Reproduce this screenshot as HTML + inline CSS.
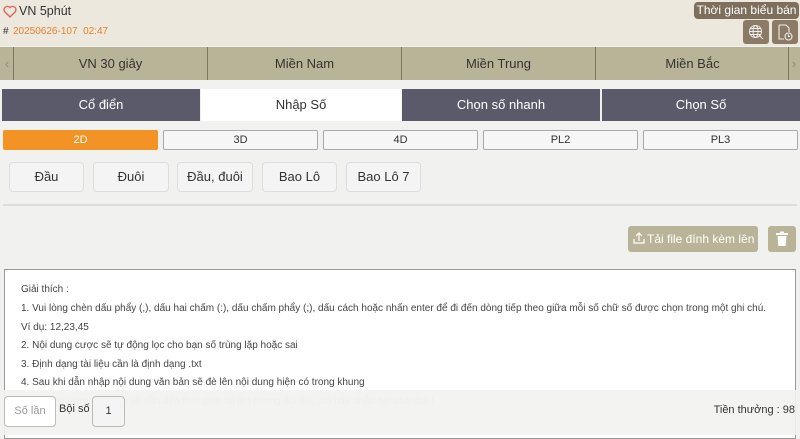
<!DOCTYPE html>
<html><head><meta charset="utf-8"><style>
*{box-sizing:border-box;margin:0;padding:0}
body{width:800px;height:435px;overflow:hidden;background:#f1f1f0;font-family:"Liberation Sans",sans-serif;color:#333;position:relative}
.hdr{position:absolute;left:0;top:0;width:800px;height:46px;background:#ede8dd}
.abs{position:absolute}
.nav{position:absolute;top:47px;left:0;width:800px;height:33px;background:#b9b497;font-size:13px;color:#333}
.nav div{position:absolute;top:0;height:33px;line-height:33px;text-align:center}
.sep{position:absolute;top:7px;width:1px;height:19px;background:#7d775f}
.tabs{position:absolute;top:89px;left:2px;width:798px;height:32px}
.tab{position:absolute;top:0;height:32px;line-height:32px;text-align:center;font-size:13px;color:#fff;background:#5b5a6a}
.seg{position:absolute;top:130px;height:20px;line-height:18px;text-align:center;font-size:11px;border:1px solid #aaa;border-radius:2px;background:#f6f6f6;color:#333}
.sb{position:absolute;top:162px;height:30px;line-height:28px;text-align:center;font-size:13px;border:1px solid #ddd;border-radius:4px;background:#f4f4f4;color:#333}
.box{position:absolute;left:4px;top:269px;width:792px;height:170px;background:#fff;border:1px solid #999;font-size:10px;color:#444}
.box p{position:absolute;left:16px;white-space:nowrap}
.bot{position:absolute;left:0;top:390px;width:800px;height:45px;background:rgba(242,242,241,0.9)}
</style></head><body>
<div class="hdr"></div>
<svg class="abs" style="left:3px;top:5px" width="14" height="13" viewBox="0 0 14 13"><path d="M7 12 L1.8 6.8 A3.2 3.2 0 0 1 7 2.6 A3.2 3.2 0 0 1 12.2 6.8 Z" fill="none" stroke="#e0604a" stroke-width="1.3"/></svg>
<div class="abs" style="left:19px;top:4px;font-size:12.5px;color:#333">VN 5phút</div>
<div class="abs" style="left:3px;top:26px;font-size:10px;color:#333">#</div>
<div class="abs" style="left:13px;top:26px;font-size:10px;color:#e77f2e">20250626-107&nbsp;&nbsp;02:47</div>
<div class="abs" style="left:694px;top:2px;width:105px;height:17px;background:#7e6f5c;border-radius:4px;color:#fff;font-size:12px;line-height:17px;text-align:center">Thời gian biểu bán</div>
<div class="abs" style="left:743px;top:20px;width:26px;height:24px;background:#8b7b66;border-radius:3px"></div>
<svg class="abs" style="left:748px;top:24px" width="17" height="17" viewBox="0 0 17 17" fill="none" stroke="#eee" stroke-width="1"><circle cx="7.5" cy="7.5" r="6"/><ellipse cx="7.5" cy="7.5" rx="2.5" ry="6"/><path d="M1.5 7.5H13.5M2.5 4.5H12.5M2.5 10.5H12.5M11 11l4 4"/></svg>
<div class="abs" style="left:772px;top:20px;width:26px;height:24px;background:#8b7b66;border-radius:3px"></div>
<svg class="abs" style="left:776px;top:23px" width="18" height="19" viewBox="0 0 18 19" fill="none" stroke="#eee" stroke-width="1.1"><path d="M3 2H10L13 5V9M3 2V16H8"/><circle cx="12.5" cy="13.5" r="3.5"/><path d="M12.5 11.5V13.5H14"/></svg>
<div class="nav">
<div style="left:2px;width:10px;color:#888">‹</div>
<div class="sep" style="left:13px"></div>
<div style="left:14px;width:193px">VN 30 giây</div>
<div class="sep" style="left:207px"></div>
<div style="left:208px;width:193px">Miền Nam</div>
<div class="sep" style="left:401px"></div>
<div style="left:402px;width:193px">Miền Trung</div>
<div class="sep" style="left:595px"></div>
<div style="left:596px;width:193px">Miền Bắc</div>
<div class="sep" style="left:788px"></div>
<div style="left:789px;width:10px;color:#888">›</div>
</div>
<div class="tabs">
<div class="tab" style="left:0;width:198px">Cổ điển</div>
<div class="tab" style="left:199px;width:200px;background:#fff;color:#333">Nhập Số</div>
<div class="tab" style="left:400px;width:198px">Chọn số nhanh</div>
<div class="tab" style="left:600px;width:198px">Chọn Số</div>
</div>
<div class="seg" style="left:3px;width:155px;background:#f39325;border-color:#f39325;color:#fff">2D</div>
<div class="seg" style="left:163px;width:155px">3D</div>
<div class="seg" style="left:323px;width:155px">4D</div>
<div class="seg" style="left:483px;width:155px">PL2</div>
<div class="seg" style="left:643px;width:155px">PL3</div>
<div class="sb" style="left:9px;width:75px">Đầu</div>
<div class="sb" style="left:93px;width:76px">Đuôi</div>
<div class="sb" style="left:177px;width:76px">Đầu, đuôi</div>
<div class="sb" style="left:262px;width:75px">Bao Lô</div>
<div class="sb" style="left:346px;width:75px">Bao Lô 7</div>
<div class="abs" style="left:3px;top:204px;width:794px;height:2px;background:#dcdcd8"></div>
<div class="abs" style="left:628px;top:226px;width:130px;height:26px;background:#b9b497;border-radius:3px;color:#fff;font-size:12px;line-height:26px;padding-left:19px">Tải file đính kèm lên</div>
<svg class="abs" style="left:633px;top:232px" width="12" height="12" viewBox="0 0 12 12" fill="none" stroke="#fff" stroke-width="1.2"><path d="M1 7V11H11V7M6 9V1M3 4L6 1L9 4"/></svg>
<div class="abs" style="left:768px;top:226px;width:28px;height:26px;background:#b9b497;border-radius:3px"></div>
<svg class="abs" style="left:775px;top:231px" width="14" height="16" viewBox="0 0 14 16" fill="#fff"><rect x="1" y="2" width="12" height="2"/><rect x="5" y="0.5" width="4" height="2"/><path d="M2.5 5H11.5L10.7 15H3.3Z"/></svg>
<div class="box">
<p style="top:14px">Giải thích :</p>
<p style="top:33px">1. Vui lòng chèn dấu phẩy (,), dấu hai chấm (:), dấu chấm phẩy (;), dấu cách hoặc nhấn enter để đi đến dòng tiếp theo giữa mỗi số chữ số được chọn trong một ghi chú.</p>
<p style="top:52px">Ví dụ: 12,23,45</p>
<p style="top:70px">2. Nội dung cược sẽ tự động lọc cho bạn số trùng lặp hoặc sai</p>
<p style="top:89px">3. Định dạng tài liệu cần là định dạng .txt</p>
<p style="top:107px">4. Sau khi dẫn nhập nội dung văn bản sẽ đè lên nội dung hiện có trong khung</p>
<p style="top:126px;color:#ccc">5. Tài liệu tương đối lớn sẽ dẫn đến thời gian tải lên tương đối dài, xin hãy nhẫn nại chờ đợi !</p>
</div>
<div class="bot"></div>
<div class="abs" style="left:4px;top:396px;width:52px;height:31px;background:#fff;border:1px solid #bbb;border-radius:4px;font-size:11px;color:#999;line-height:29px;text-align:center">Số lần</div>
<div class="abs" style="left:59px;top:403px;font-size:11px;color:#333">Bội số</div>
<div class="abs" style="left:92px;top:396px;width:33px;height:31px;background:#f4f4f4;border:1px solid #bbb;border-radius:4px;font-size:11px;line-height:29px;text-align:center">1</div>
<div class="abs" style="right:5px;top:404px;font-size:11px;color:#333">Tiền thưởng : 98</div>
</body></html>
